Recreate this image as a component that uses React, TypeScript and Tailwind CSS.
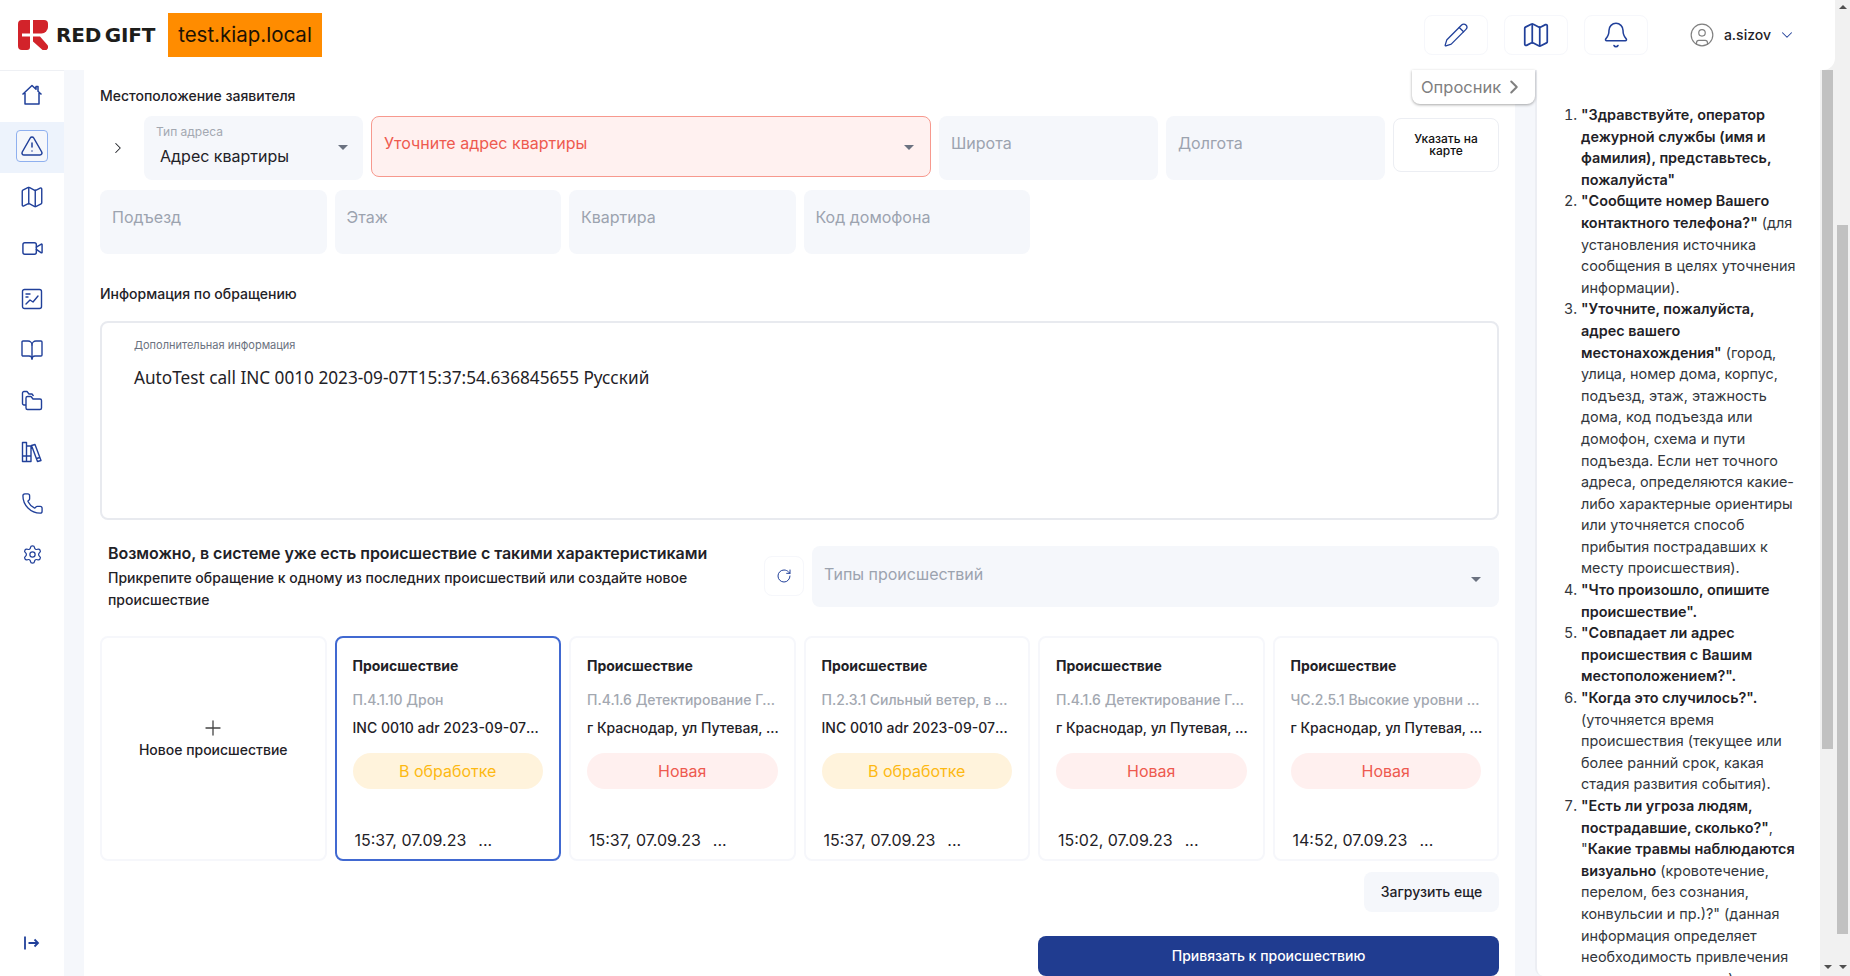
import { Bell, BookOpen, ChevronDown, ChevronRight, CircleUser, Map as MapIcon, Pencil, Phone, Plus, RotateCw, Settings, TriangleAlert, Video } from "lucide-react";
import type { ReactNode } from "react";

const blue = "#21409a";

function HomeIcon() {
  return (
    <svg width="22" height="22" viewBox="0 0 22 22" fill="none" stroke={blue} strokeWidth="1.5" strokeLinejoin="round">
      <path d="M1.500 10.500 11 1.500l4 3.800V2.500h2v4.700l3.500 3.300M4 9v11h14V9" />
    </svg>
  );
}

function ChartIcon() {
  return (
    <svg width="22" height="22" viewBox="0 0 22 22" fill="none" stroke={blue} strokeWidth="1.4" strokeLinecap="round" strokeLinejoin="round">
      <rect x="1.500" y="1.500" width="19" height="19" rx="2" />
      <path d="M5 6h4M5 9h2M5 16l4-4 3 2 5-6" />
    </svg>
  );
}

function FoldersIcon() {
  return (
    <svg width="22" height="22" viewBox="0 0 22 22" fill="none" stroke={blue} strokeWidth="1.4" strokeLinejoin="round">
      <path d="M5 15H3a1.500 1.500 0 0 1-1.500-1.500V3A1.500 1.500 0 0 1 3 1.500h3l2 2.500h3l1.500 2" />
      <path d="M5 8a1.500 1.500 0 0 1 1.500-1.500H10l2 2.500h7a1.500 1.500 0 0 1 1.500 1.500V18a1.500 1.500 0 0 1-1.500 1.500H6.500A1.500 1.500 0 0 1 5 18Z" />
    </svg>
  );
}

function BooksIcon() {
  return (
    <svg width="22" height="22" viewBox="0 0 22 22" fill="none" stroke={blue} strokeWidth="1.4" strokeLinejoin="round">
      <path d="M1.500 1.500h4v19h-4zM5.500 5h4.500v15.500H5.500zM1.500 15h8.500M10.500 4.500l3.500-1 6 16-3.500 1zM15.500 17.500l3.500-1" />
    </svg>
  );
}

function CollapseIcon() {
  return (
    <svg width="16" height="16" viewBox="0 0 16 16" fill="none" stroke={blue} strokeWidth="1.800">
      <path d="M1 1.500v13M4.500 8H14M10.500 4.500 14 8l-3.500 3.500" />
    </svg>
  );
}

function Logo() {
  return (
    <div className="flex items-center gap-[8px] w-[138px]">
      <svg width="30" height="30" viewBox="0 0 30 30" fill="#d2232a" className="shrink-0">
        <path d="M4 0h8v13.500H4v3h8V27a3 3 0 0 1-3 3H4a4 4 0 0 1-4-4V4a4 4 0 0 1 4-4Z" />
        <path d="M15 0h11a4 4 0 0 1 4 4v3a6.500 6.500 0 0 1-6.500 6.500H15Z" />
        <path d="M15 16.500h7l7 8a3.500 3.500 0 0 1-5 5l-9-8Z" />
      </svg>
      <span className="font-['DejaVu_Sans',sans-serif] font-bold text-[20px] leading-none tracking-[-0.2px] [word-spacing:-3px] text-[#1d1d1b] whitespace-nowrap">RED GIFT</span>
    </div>
  );
}

function Field({ text, className = "" }: { text: string; className?: string }) {
  return (
    <div className={`h-16 rounded-lg bg-[#f5f7fb] px-3 pt-[15px] text-base leading-6 text-[#9ca3af] ${className}`}>{text}</div>
  );
}

function Caret() {
  return <span className="w-0 h-0 border-x-[5px] border-x-transparent border-t-[5px] border-t-[#6b7280]" />;
}

type Incident = { kind: string; text: string; status: "work" | "new"; time: string };

const incidents: Incident[] = [
  { kind: "П.4.1.10 Дрон", text: "INC 0010 adr 2023-09-07T15:37:54.636845655", status: "work", time: "15:37, 07.09.23" },
  { kind: "П.4.1.6 Детектирование Газа в помещении", text: "г Краснодар, ул Путевая, д 1", status: "new", time: "15:37, 07.09.23" },
  { kind: "П.2.3.1 Сильный ветер, в том числе шквал", text: "INC 0010 adr 2023-09-07T15:37:54.636845655", status: "work", time: "15:37, 07.09.23" },
  { kind: "П.4.1.6 Детектирование Газа в помещении", text: "г Краснодар, ул Путевая, д 1", status: "new", time: "15:02, 07.09.23" },
  { kind: "ЧС.2.5.1 Высокие уровни воды, половодье", text: "г Краснодар, ул Путевая, д 1", status: "new", time: "14:52, 07.09.23" },
];

function IncidentCard({ item, active }: { item: Incident; active: boolean }) {
  return (
    <div className={`h-[225px] rounded-lg border-2 px-4 flex flex-col ${active ? "border-[#4169d1]" : "border-[#f6f7fb]"}`}>
      <div className="mt-[18px] text-sm leading-5 font-bold text-[#1f2227]">Происшествие</div>
      <div className="mt-[14px] text-sm leading-5 font-medium text-[#a3a8b1] truncate">{item.kind}</div>
      <div className="mt-[8px] -mr-[2px] text-sm leading-5 font-medium text-[#1f2227] truncate">{item.text}</div>
      <div
        className={`mt-[15px] h-9 rounded-full flex items-center justify-center text-base ${item.status === "work" ? "bg-[#fff3dc] text-[#fdb913]" : "bg-[#fff0ef] text-[#ee5a4f]"}`}
      >
        {item.status === "work" ? "В обработке" : "Новая"}
      </div>
      <div className="mt-auto mb-[7px] pl-[2px] flex gap-[12px] text-base leading-6 text-[#1f2227]">
        <span>{item.time}</span>
        <span>...</span>
      </div>
    </div>
  );
}

function NavItem({ active, children }: { active?: boolean; children: ReactNode }) {
  return (
    <div className={`h-[51px] pb-[3px] flex items-center justify-center ${active ? "bg-[#edf3fc]" : ""}`}>
      {active ? <div className="w-8 h-8 rounded border border-[#8fb0ef] bg-[#f5f7fb] flex items-center justify-center">{children}</div> : children}
    </div>
  );
}

export default function App() {
  return (
    <div className="h-[976px] w-[1850px] flex overflow-hidden bg-[#f1f1f1] font-['Inter',sans-serif] text-[#1f2227]">
      <div className="w-[1835px] flex flex-col shrink-0">
        <header className="h-[70px] shrink-0 bg-white rounded-br-xl flex items-center relative z-10">
          <div className="ml-[18px]">
            <Logo />
          </div>
          <div className="ml-[12px] h-11 w-[154px] bg-[#ff8c00] flex items-center justify-center text-[20.5px] text-[#1c1204]">test.kiap.local</div>
          <div className="ml-auto flex items-center gap-4">
            <div className="w-[64px] h-10 rounded-lg border border-[#f6f7fb] flex items-center justify-center">
              <Pencil size={26} color={blue} strokeWidth={1.2} />
            </div>
            <div className="w-[64px] h-10 rounded-lg border border-[#f6f7fb] flex items-center justify-center">
              <MapIcon size={30} color={blue} strokeWidth={1.4} />
            </div>
            <div className="w-[64px] h-10 rounded-lg border border-[#f6f7fb] flex items-center justify-center">
              <Bell size={28} color={blue} strokeWidth={1.3} />
            </div>
          </div>
          <div className="ml-[41px] mr-[39px] flex items-center">
            <CircleUser size={26} color="#808080" strokeWidth={1.1} />
            <span className="ml-[9px] text-sm font-medium">a.sizov</span>
            <ChevronDown size={18} color={blue} strokeWidth={1.4} className="ml-[7px]" />
          </div>
        </header>

        <div className="flex-1 min-h-0 flex bg-[#f5f7fb]">
          <nav className="w-16 shrink-0 bg-white flex flex-col border-t border-[#eef0f4] pb-[25px]">
            <NavItem><HomeIcon /></NavItem>
            <NavItem active><TriangleAlert size={24} color={blue} strokeWidth={1.5} /></NavItem>
            <NavItem><MapIcon size={26} color={blue} strokeWidth={1.3} /></NavItem>
            <NavItem><Video size={23} color={blue} strokeWidth={1.5} /></NavItem>
            <NavItem><ChartIcon /></NavItem>
            <NavItem><BookOpen size={24} color={blue} strokeWidth={1.4} /></NavItem>
            <NavItem><FoldersIcon /></NavItem>
            <NavItem><BooksIcon /></NavItem>
            <NavItem><Phone size={23} color={blue} strokeWidth={1.4} /></NavItem>
            <NavItem><Settings size={21} color={blue} strokeWidth={1.4} /></NavItem>
            <div className="mt-auto flex justify-center">
              <CollapseIcon />
            </div>
          </nav>

          <main className="ml-5 w-[1431px] shrink-0 bg-white relative px-4">
            <div className="absolute right-[-20px] top-0 z-10 w-[123px] h-[34px] rounded-b-lg bg-white shadow-[0_1px_3px_rgba(0,0,0,0.35)] flex items-center pl-[9px] text-[#808080] text-[16.5px]">
              Опросник
              <ChevronRight size={22} strokeWidth={2.2} className="ml-[2px]" />
            </div>
            <h2 className="mt-[16px] text-sm leading-5 font-medium">Местоположение заявителя</h2>
            <div className="mt-[10px] flex items-start gap-2">
              <div className="w-[36px] h-16 flex items-center justify-center">
                <ChevronRight size={18} strokeWidth={1.4} />
              </div>
              <div className="w-[219px] h-16 rounded-lg bg-[#f5f7fb] pl-[12px] pr-[14px] relative">
                <div className="pt-[8px] text-xs leading-4 text-[#a3a8b1]">Тип адреса</div>
                <div className="ml-[4px] mt-[4px] text-base leading-6">Адрес квартиры</div>
                <span className="absolute right-[15px] top-[29px] flex"><Caret /></span>
              </div>
              <div className="w-[560px] h-[61px] rounded-lg bg-[#fff1f0] border border-[#f7998e] pl-3 pr-[14px] pt-[14px] text-base leading-6 text-[#ee5a4f] relative">
                Уточните адрес квартиры
                <span className="absolute right-[16px] top-[28px] flex"><Caret /></span>
              </div>
              <Field text="Широта" className="w-[219px]" />
              <Field text="Долгота" className="w-[219px]" />
              <div className="mt-[2px] w-[106px] h-[54px] px-4 rounded-lg border border-[#eceef3] flex items-center justify-center text-center text-xs leading-[12px] text-[#111] font-medium">
                Указать на карте
              </div>
            </div>
            <div className="mt-[10px] grid grid-cols-6 gap-2">
              <Field text="Подъезд" />
              <Field text="Этаж" />
              <Field text="Квартира" />
              <Field text="Код домофона" />
            </div>

            <h2 className="mt-[30px] text-sm leading-5 font-medium">Информация по обращению</h2>
            <div className="mt-[17px] h-[199px] rounded-lg border-2 border-[#e8eaef] pl-8 pt-[14px]">
              <div className="text-[11px] leading-4 text-[#6b7280]">Дополнительная информация</div>
              <div className="mt-[13px] font-['Noto_Sans',sans-serif] text-[17.2px] leading-6">AutoTest call INC 0010 2023-09-07T15:37:54.636845655 Русский</div>
            </div>

            <div className="mt-[19px] flex items-start">
              <div className="w-[664px] pl-2 pr-[5px] shrink-0">
                <div className="mt-[2px] text-base leading-6 font-semibold tracking-[-0.05px]">Возможно, в системе уже есть происшествие с такими характеристиками</div>
                <div className="mt-[2px] text-sm leading-[22px] font-medium">Прикрепите обращение к одному из последних происшествий или создайте новое происшествие</div>
              </div>
              <div className="mt-[17px] w-10 h-10 rounded-lg border border-[#f6f7fb] flex items-center justify-center">
                <RotateCw size={16} color={blue} strokeWidth={1.5} />
              </div>
              <div className="ml-2 mt-[7px] flex-1 h-[61px] rounded-lg bg-[#f5f7fb] pl-3 pr-[18px] pt-[16px] text-base leading-6 text-[#9ca3af] relative">
                Типы происшествий
                <span className="absolute right-[18px] top-[31px] flex"><Caret /></span>
              </div>
            </div>

            <div className="mt-[25px] grid grid-cols-6 gap-2">
              <div className="h-[225px] rounded-lg border-2 border-[#f6f7fb] flex flex-col items-center pt-[78px]">
                <Plus size={24} color="#444" strokeWidth={1.3} />
                <span className="text-sm leading-5 font-medium">Новое происшествие</span>
              </div>
              {incidents.map((item, i) => (
                <IncidentCard key={i} item={item} active={i === 0} />
              ))}
            </div>

            <div className="mt-[11px] flex justify-end">
              <div className="w-[135px] h-10 rounded-lg bg-[#f5f7fb] flex items-center justify-center text-sm font-medium">Загрузить еще</div>
            </div>
            <div className="mt-[24px] flex justify-end">
              <div className="w-[461px] h-10 rounded-lg bg-[#203c90] flex items-center justify-center text-sm font-medium text-white">Привязать к происшествию</div>
            </div>
          </main>

          <div className="ml-5 w-[285px] shrink-0 bg-white border-l-2 border-[#eceef3] rounded-bl-lg overflow-hidden pl-[24px] pr-[20px] pt-[34px]">
            <ol className="list-decimal pl-[20px] text-[14.4px] leading-[21.6px] text-[#33373d]">
              <li><b className="font-semibold text-[#1f2227]">"Здравствуйте, оператор дежурной службы (имя и фамилия), представьтесь, пожалуйста"</b></li>
              <li><b className="font-semibold text-[#1f2227]">"Сообщите номер Вашего контактного телефона?"</b> (для установления источника сообщения в целях уточнения информации).</li>
              <li><b className="font-semibold text-[#1f2227]">"Уточните, пожалуйста, адрес вашего местонахождения"</b> (город, улица, номер дома, корпус, подъезд, этаж, этажность дома, код подъезда или домофон, схема и пути подъезда. Если нет точного адреса, определяются какие-либо характерные ориентиры или уточняется способ прибытия пострадавших к месту происшествия).</li>
              <li><b className="font-semibold text-[#1f2227]">"Что произошло, опишите происшествие".</b></li>
              <li><b className="font-semibold text-[#1f2227]">"Совпадает ли адрес происшествия с Вашим местоположением?".</b></li>
              <li><b className="font-semibold text-[#1f2227]">"Когда это случилось?".</b> (уточняется время происшествия (текущее или более ранний срок, какая стадия развития события).</li>
              <li><b className="font-semibold text-[#1f2227]">"Есть ли угроза людям, пострадавшие, сколько?"</b>, "<b className="font-semibold text-[#1f2227]">Какие травмы наблюдаются визуально</b> (кровотечение, перелом, без сознания, конвульсии и пр.)?" (данная информация определяет необходимость привлечения дополнительных сил).</li>
            </ol>
          </div>

          <div className="w-[15px] shrink-0 bg-[#f1f1f1] flex flex-col items-center">
            <div className="w-[11px] h-[679px] bg-[#c1c1c1]" />
            <span className="mt-auto mb-[7px] w-0 h-0 border-x-[4px] border-x-transparent border-t-[4px] border-t-[#505050]" />
          </div>
        </div>
      </div>

      <div className="w-[15px] shrink-0 flex flex-col items-center">
        <span className="mt-[5px] w-0 h-0 border-x-[4px] border-x-transparent border-b-[4px] border-b-[#505050]" />
        <div className="mt-[216px] w-[11px] h-[709px] bg-[#c1c1c1]" />
        <span className="mt-auto mb-[7px] w-0 h-0 border-x-[4px] border-x-transparent border-t-[4px] border-t-[#505050]" />
      </div>
    </div>
  );
}
